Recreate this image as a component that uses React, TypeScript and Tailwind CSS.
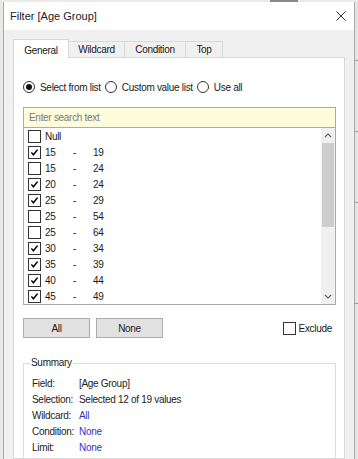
const ITEMS: { a: string; b?: string; on: boolean }[] = [
  { a: "Null", on: false },
  { a: "15", b: "19", on: true },
  { a: "15", b: "24", on: false },
  { a: "20", b: "24", on: true },
  { a: "25", b: "29", on: true },
  { a: "25", b: "54", on: false },
  { a: "25", b: "64", on: false },
  { a: "30", b: "34", on: true },
  { a: "35", b: "39", on: true },
  { a: "40", b: "44", on: true },
  { a: "45", b: "49", on: true },
];

const SUMMARY: { label: string; value: string; blue?: boolean }[] = [
  { label: "Field:", value: "[Age Group]" },
  { label: "Selection:", value: "Selected 12 of 19 values" },
  { label: "Wildcard:", value: "All", blue: true },
  { label: "Condition:", value: "None", blue: true },
  { label: "Limit:", value: "None", blue: true },
];

function Check({ on }: { on: boolean }) {
  return (
    <span className="flex h-[13px] w-[13px] shrink-0 items-center justify-center border border-[#333] bg-white">
      {on && (
        <svg width="9" height="9" viewBox="0 0 9 9">
          <path d="M1.4 4.6 L3.4 6.8 L7.6 1.6" fill="none" stroke="#000" strokeWidth="1.5" />
        </svg>
      )}
    </span>
  );
}

function Radio({ on, label }: { on: boolean; label: string }) {
  return (
    <label className="flex items-center gap-[5px]">
      <span className="flex h-[12px] w-[12px] items-center justify-center rounded-full border border-[#333] bg-white">
        {on && <span className="h-[6px] w-[6px] rounded-full bg-[#111]" />}
      </span>
      {label}
    </label>
  );
}

function Tab({ label, active, w }: { label: string; active?: boolean; w: string }) {
  if (active)
    return (
      <div className={`${w} flex h-[19px] items-start justify-center border-x border-t border-[#d9d9d9] bg-white pt-[3px]`}>
        {label}
      </div>
    );
  return (
    <div className={`${w} mb-px flex h-[16px] items-center justify-center border-r border-t border-[#d9d9d9] bg-[#f0f0f0]`}>
      {label}
    </div>
  );
}

export default function App() {
  return (
    <div className="h-[459px] w-[358px] overflow-hidden bg-[#ebebeb] font-['Liberation_Sans',Arial,sans-serif] text-[10px] tracking-[-0.3px] text-[#1a1a1a]">
      <div className="flex h-[2px]">
        <div className="ml-[270px] w-[28px] bg-[#8a8a8a]" />
      </div>
      <div className="flex h-[457px]">
        <div className="w-[3px] bg-[#e9e9e9]" />
        <div className="flex w-[352px] flex-col border-x border-[#a8a8a8]">
          {/* title bar */}
          <div className="flex h-[28px] shrink-0 items-center justify-between bg-white pl-[6px] pr-[8px]">
            <span className="text-[11px] tracking-normal text-[#222]">Filter [Age Group]</span>
            <svg width="10" height="10" viewBox="0 0 10 10">
              <path d="M0.5 0.5 L9.5 9.5 M9.5 0.5 L0.5 9.5" stroke="#333" strokeWidth="1" />
            </svg>
          </div>

          <div className="flex min-h-0 flex-1 flex-col bg-[#f0f0f0] pl-[9px] pr-[9px] pt-[9px]">
            {/* tabs */}
            <div className="relative z-10 flex h-[19px] shrink-0 items-end">
              <Tab label="General" active w="w-[56px]" />
              <Tab label="Wildcard" w="w-[56px]" />
              <Tab label="Condition" w="w-[61px]" />
              <Tab label="Top" w="w-[37px]" />
            </div>

            <div className="-mt-px min-h-0 flex-1 overflow-hidden border border-[#d9d9d9] bg-white pl-[9px] pt-[23px]">
              {/* mode radios */}
              <div className="flex h-[12px] items-center gap-[4px]">
                <Radio on label="Select from list" />
                <Radio on={false} label="Custom value list" />
                <Radio on={false} label="Use all" />
              </div>

              {/* search + list */}
              <div className="mt-[14px] w-[313px] border border-[#ababab]">
                <div className="flex h-[20px] items-center border-b border-[#ababab] bg-[#fffcdb] pl-[5px] text-[#7a7a7a]">
                  Enter search text
                </div>
                <div className="flex h-[176px]">
                  <div className="flex-1">
                    {ITEMS.map((it, i) => (
                      <div key={i} className="flex h-[16px] items-center pl-[4px]">
                        <Check on={it.on} />
                        <span className="ml-[4px] w-[28px]">{it.a}</span>
                        {it.b && (
                          <>
                            <span className="w-[20px]">-</span>
                            <span>{it.b}</span>
                          </>
                        )}
                      </div>
                    ))}
                  </div>
                  <div className="flex w-[14px] flex-col bg-[#f0f0f0]">
                    <div className="flex h-[15px] items-center justify-center">
                      <svg width="8" height="5" viewBox="0 0 8 5">
                        <path d="M0.8 4.2 L4 1 L7.2 4.2" fill="none" stroke="#606060" strokeWidth="1.2" />
                      </svg>
                    </div>
                    <div className="mx-px h-[84px] bg-[#cdcdcd]" />
                    <div className="flex-1" />
                    <div className="flex h-[16px] items-center justify-center">
                      <svg width="8" height="5" viewBox="0 0 8 5">
                        <path d="M0.8 0.8 L4 4 L7.2 0.8" fill="none" stroke="#606060" strokeWidth="1.2" />
                      </svg>
                    </div>
                  </div>
                </div>
              </div>

              {/* buttons */}
              <div className="mt-[13px] flex w-[313px] items-center">
                <button className="flex h-[20px] w-[67px] items-center justify-center border border-[#adadad] bg-[#e1e1e1]">All</button>
                <button className="ml-[6px] flex h-[20px] w-[67px] items-center justify-center border border-[#adadad] bg-[#e1e1e1]">None</button>
                <label className="ml-auto mr-[4px] flex items-center gap-[3px]">
                  <Check on={false} />
                  Exclude
                </label>
              </div>

              {/* summary */}
              <fieldset className="mt-[19px] w-[313px] border border-[#dcdcdc] pb-[10px]">
                <legend className="ml-[6px] px-[1px] leading-[12px] text-[#222]">Summary</legend>
                <div className="pl-[8px] pt-[6px]">
                  {SUMMARY.map((r) => (
                    <div key={r.label} className="flex h-[16px] items-center">
                      <span className="w-[47px] shrink-0 text-[#222]">{r.label}</span>
                      <span className={r.blue ? "text-[#3333cc]" : "text-[#222]"}>{r.value}</span>
                    </div>
                  ))}
                </div>
              </fieldset>
            </div>
          </div>
        </div>
        <div className="flex w-[3px] flex-col bg-[#e4e4e4]">
          <div className="mt-[58px] h-px bg-[#9a9a9a]" />
          <div className="mt-[70px] h-px bg-[#9a9a9a]" />
          <div className="mt-[70px] h-px bg-[#9a9a9a]" />
          <div className="mt-[100px] h-px bg-[#9a9a9a]" />
        </div>
      </div>
    </div>
  );
}
